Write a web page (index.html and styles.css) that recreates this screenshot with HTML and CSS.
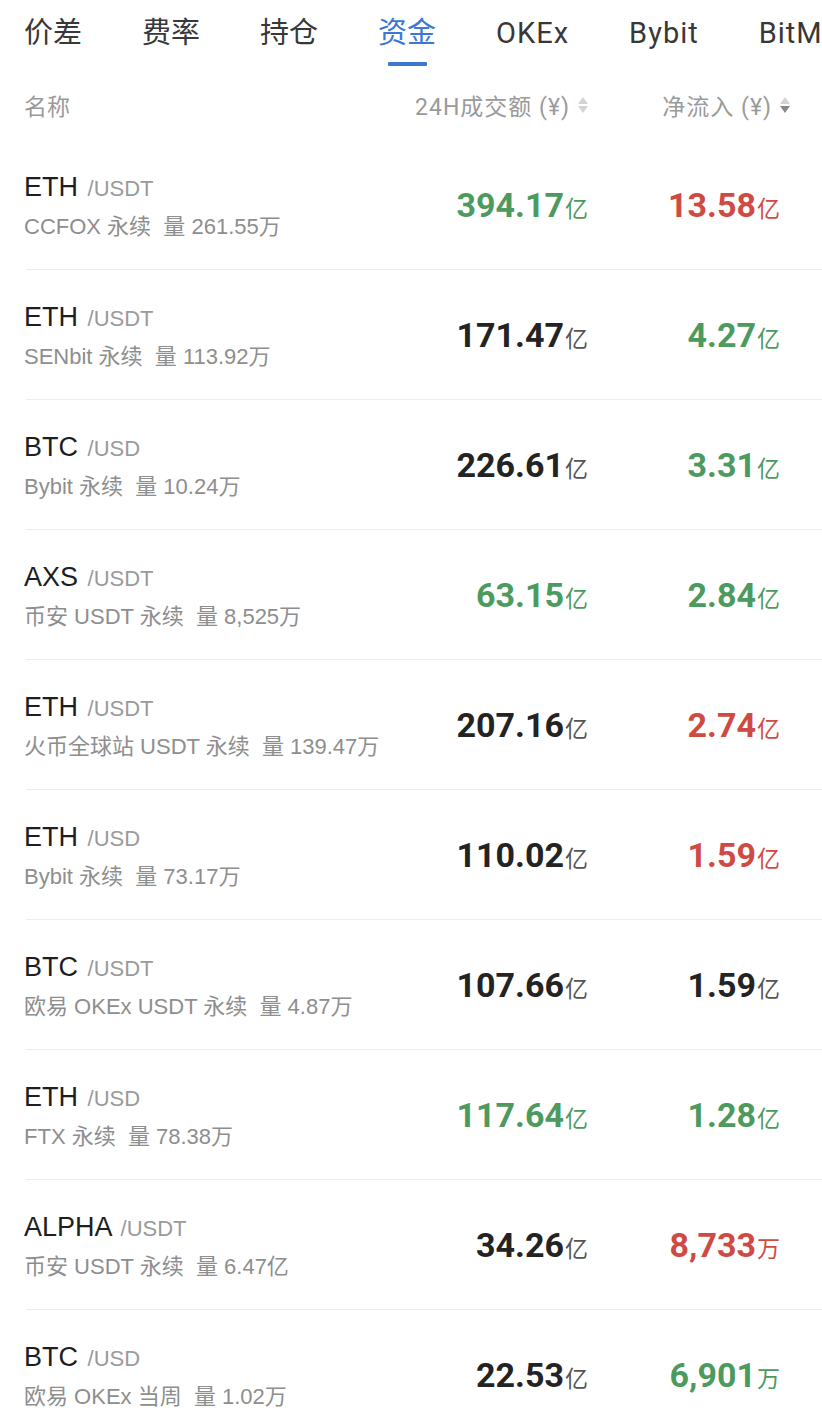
FILE: index.html
```html
<!DOCTYPE html>
<html lang="zh">
<head>
<meta charset="utf-8">
<link rel="stylesheet" href="styles.css">
</head>
<body>
<div class="page">
  <nav class="tabs">
    <div class="tab">价差</div>
    <div class="tab">费率</div>
    <div class="tab">持仓</div>
    <div class="tab active">资金</div>
    <div class="tab latin">OKEx</div>
    <div class="tab latin">Bybit</div>
    <div class="tab latin">BitMEX</div>
  </nav>
  <div class="head">
    <div class="h-name">名称</div>
    <div class="h-col">24H成交额 (¥)<span class="sort"><i class="up"></i><i class="down"></i></span></div>
    <div class="h-col h-col2">净流入 (¥)<span class="sort"><i class="up"></i><i class="down dark"></i></span></div>
  </div>
  <div class="list">
    <div class="row">
      <div class="info"><div class="title">ETH <span class="pair">/USDT</span></div><div class="sub">CCFOX 永续&nbsp; 量 261.55万</div></div>
      <div class="val green">394.17<span class="unit">亿</span></div>
      <div class="val red">13.58<span class="unit">亿</span></div>
    </div>
    <div class="row">
      <div class="info"><div class="title">ETH <span class="pair">/USDT</span></div><div class="sub">SENbit 永续&nbsp; 量 113.92万</div></div>
      <div class="val">171.47<span class="unit">亿</span></div>
      <div class="val green">4.27<span class="unit">亿</span></div>
    </div>
    <div class="row">
      <div class="info"><div class="title">BTC <span class="pair">/USD</span></div><div class="sub">Bybit 永续&nbsp; 量 10.24万</div></div>
      <div class="val">226.61<span class="unit">亿</span></div>
      <div class="val green">3.31<span class="unit">亿</span></div>
    </div>
    <div class="row">
      <div class="info"><div class="title">AXS <span class="pair">/USDT</span></div><div class="sub">币安 USDT 永续&nbsp; 量 8,525万</div></div>
      <div class="val green">63.15<span class="unit">亿</span></div>
      <div class="val green">2.84<span class="unit">亿</span></div>
    </div>
    <div class="row">
      <div class="info"><div class="title">ETH <span class="pair">/USDT</span></div><div class="sub">火币全球站 USDT 永续&nbsp; 量 139.47万</div></div>
      <div class="val">207.16<span class="unit">亿</span></div>
      <div class="val red">2.74<span class="unit">亿</span></div>
    </div>
    <div class="row">
      <div class="info"><div class="title">ETH <span class="pair">/USD</span></div><div class="sub">Bybit 永续&nbsp; 量 73.17万</div></div>
      <div class="val">110.02<span class="unit">亿</span></div>
      <div class="val red">1.59<span class="unit">亿</span></div>
    </div>
    <div class="row">
      <div class="info"><div class="title">BTC <span class="pair">/USDT</span></div><div class="sub">欧易 OKEx USDT 永续&nbsp; 量 4.87万</div></div>
      <div class="val">107.66<span class="unit">亿</span></div>
      <div class="val">1.59<span class="unit">亿</span></div>
    </div>
    <div class="row">
      <div class="info"><div class="title">ETH <span class="pair">/USD</span></div><div class="sub">FTX 永续&nbsp; 量 78.38万</div></div>
      <div class="val green">117.64<span class="unit">亿</span></div>
      <div class="val green">1.28<span class="unit">亿</span></div>
    </div>
    <div class="row">
      <div class="info"><div class="title">ALPHA <span class="pair">/USDT</span></div><div class="sub">币安 USDT 永续&nbsp; 量 6.47亿</div></div>
      <div class="val">34.26<span class="unit">亿</span></div>
      <div class="val red">8,733<span class="unit">万</span></div>
    </div>
    <div class="row">
      <div class="info"><div class="title">BTC <span class="pair">/USD</span></div><div class="sub">欧易 OKEx 当周&nbsp; 量 1.02万</div></div>
      <div class="val">22.53<span class="unit">亿</span></div>
      <div class="val green">6,901<span class="unit">万</span></div>
    </div>
  </div>
</div>
</body>
</html>
```

FILE: styles.css
```css
html, body {
  margin: 0;
  padding: 0;
  background: #fff;
}
body {
  font-family: "Liberation Sans", "Noto Sans CJK SC", sans-serif;
  color: #222;
  width: 822px;
  height: 1427px;
  overflow: hidden;
}
.page {
  width: 822px;
}
.tabs {
  display: flex;
  gap: 60px;
  padding-left: 24px;
  height: 70px;
  white-space: nowrap;
  overflow: hidden;
}
.tab {
  position: relative;
  font-family: "Roboto", "Noto Sans CJK SC", sans-serif;
  font-size: 29px;
  color: #383838;
  line-height: 66px;
  flex: none;
}
.tab.latin {
  letter-spacing: 1px;
}
.tab.active {
  color: #3b78d4;
}
.tab.active::after {
  content: "";
  position: absolute;
  left: 10px;
  right: 9px;
  top: 62px;
  height: 4px;
  background: #3b78d4;
  border-radius: 1px;
}
.head {
  display: grid;
  grid-template-columns: 1fr 230px 202px;
  align-items: center;
  height: 70px;
  padding-left: 24px;
  padding-right: 32px;
  font-family: "Roboto", "Noto Sans CJK SC", sans-serif;
  font-size: 23px;
  color: #9a9a9a;
}
.h-col {
  display: flex;
  justify-content: flex-end;
  align-items: center;
  letter-spacing: 1px;
}
.sort {
  display: inline-flex;
  flex-direction: column;
  gap: 2px;
  margin-left: 8px;
}
.sort i {
  display: block;
  width: 0;
  height: 0;
  border-left: 5px solid transparent;
  border-right: 5px solid transparent;
}
.sort .up {
  border-bottom: 7px solid #d4d4d4;
}
.sort .down {
  border-top: 7px solid #d4d4d4;
}
.sort .down.dark {
  border-top-color: #888;
}
.row {
  display: grid;
  grid-template-columns: 1fr 200px 192px;
  align-items: center;
  height: 129px;
  margin-left: 26px;
  padding-left: 0;
  padding-right: 42px;
  border-bottom: 1px solid #ededed;
}
.info {
  padding-top: 2px;
  margin-left: -2px;
}
.title {
  font-size: 27px;
  line-height: 34px;
  color: #1e1e1e;
}
.pair {
  font-size: 22px;
  color: #9a9a9a;
  margin-left: 2px;
}
.sub {
  margin-top: 7px;
  font-size: 22px;
  line-height: 28px;
  color: #8e8e8e;
  white-space: nowrap;
}
.val {
  text-align: right;
  font-family: "Roboto", "DejaVu Sans", sans-serif;
  font-weight: 700;
  font-size: 34px;
  color: #232323;
  white-space: nowrap;
}
.val.green {
  color: #4c9a5e;
}
.val.red {
  color: #d04a44;
}
.unit {
  font-family: "Noto Sans CJK SC", sans-serif;
  font-weight: 400;
  font-size: 23px;
  color: #555;
  margin-left: 1px;
}
.val.green .unit {
  color: #4c9a5e;
}
.val.red .unit {
  color: #d04a44;
}
```
